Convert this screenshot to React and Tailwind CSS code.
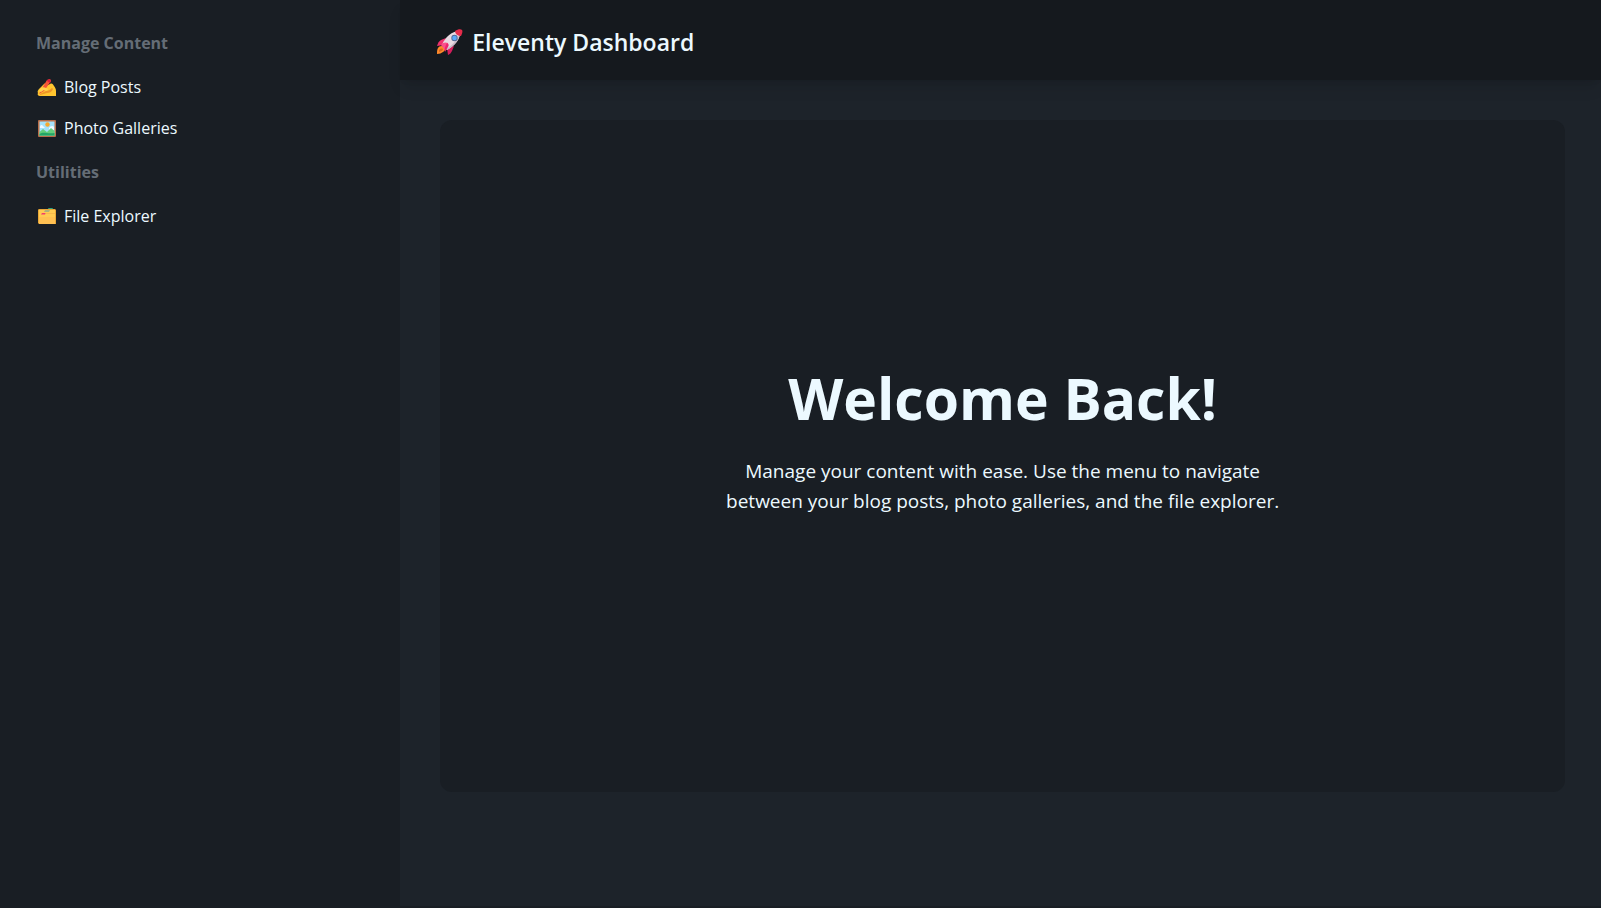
import React from "react";

function RocketIcon() {
  return (
    <svg className="h-7 w-7 shrink-0" viewBox="0 0 28 28" aria-hidden="true">
      <path d="M2 20c1-2 4-3 6-1s1 4-1 5c-2 1-3 2-6 2 0-3 0-4 1-6Z" fill="#ff8a2a" />
      <path d="M3 22c1-1 2-2 4-1 0 2-2 2-4 3Z" fill="#d9681f" />
      <path d="M10 10 5 12c-2 1-3 3-4 6l6-1Z" fill="#f0306e" />
      <path d="m18 18-2 5c-1 2-2 3-4 4l-1-7Z" fill="#d31d5c" />
      <path d="M6 17C9 9 16 3 24 3c1 7-5 15-13 19Z" fill="#e9dbe3" />
      <path d="M24 5c0 6-5 13-13 17l-1-1C17 17 22 11 24 5Z" fill="#cbbac8" />
      <path d="M19 3c3-2 6-2 7-1s0 4-1 6c-3 0-6-2-6-5Z" fill="#e62c4b" />
      <path d="M5 17c2-3 5-3 7-2-1 3-2 5-3 7Z" fill="#fa518b" />
      <path d="M11 15c2 1 2 2 1 4l-3 5c-1-2 0-6 2-9Z" fill="#ed256c" />
      <circle cx="18.5" cy="10" r="3.2" fill="#526c96" />
      <circle cx="18.5" cy="10" r="2.3" fill="#5aa9fa" />
    </svg>
  );
}

function WritingIcon() {
  return (
    <svg className="h-5 w-5 shrink-0" viewBox="-1 0 20 20" aria-hidden="true">
      <path d="M1 15c-1-1 0-3 1-4l5-5c1-1 3 0 2 2l4-2c2-1 3 0 4 2 1 1 2 3 2 5v5H3c-2 0-3-2-2-3Z" fill="#ffc52f" />
      <path d="M9 13c2 0 4-1 6-3l1 1c-1 3-4 4-6 4l-7 2v-1Z" fill="#ee9426" />
      <path d="m10 2 3-1 1 2-7 10-5 3 2-4Z" fill="#f35436" />
      <path d="m10 2 3-1 1 2-1 2-3-2Z" fill="#d91f3a" />
      <path d="M3 11c2-2 4-2 6-1l2 1c0 2-2 2-4 1l-3 2c-2 0-2-1-1-3Z" fill="#ffd34c" />
    </svg>
  );
}

function PhotoIcon() {
  return (
    <svg className="h-5 w-5 shrink-0" viewBox="-1 0 20 20" aria-hidden="true">
      <rect x="1" y="1" width="18" height="17" rx="1" fill="#b96e49" />
      <rect x="2.5" y="2.5" width="15" height="14" fill="#a5e2fa" />
      <circle cx="10.5" cy="5.5" r="2.2" fill="#f6a92e" />
      <path d="M3 8c0-2 2-3 3-1l2 2H3Zm9 1c1-2 4-3 5-1v3h-5Z" fill="#f1faff" />
      <path d="M2.500 13 6 10l4 3 4-4 3.500 3v4.500h-15Z" fill="#63ce7c" />
      <path d="M2.500 15c4-3 7 0 15-1v2.500h-15Z" fill="#22a766" />
    </svg>
  );
}

function FolderIcon() {
  return (
    <svg className="h-5 w-5 shrink-0" viewBox="-1 0 20 20" aria-hidden="true">
      <rect x="11" y="1" width="5" height="3" rx="1" fill="#28a481" />
      <path d="M1 3c0-1 1-1 2-1h15l1 1v14H2l-1-1Z" fill="#e8a737" />
      <path d="M2 3h16v14H2Z" fill="#ffcb52" />
      <path d="M2 10h16v7H2Z" fill="#ffc052" />
      <path d="M8 3.500h5l-1 1H7Z" fill="#6098a4" />
      <path d="M5 6h4l-1 1.500H4Z" fill="#f23e6d" />
      <path d="M9 6h9v1H8Z" fill="#f7b94b" />
    </svg>
  );
}

const sections = [
  {
    title: "Manage Content",
    links: [
      { label: "Blog Posts", Icon: WritingIcon },
      { label: "Photo Galleries", Icon: PhotoIcon },
    ],
  },
  { title: "Utilities", links: [{ label: "File Explorer", Icon: FolderIcon }] },
];

export default function App() {
  return (
    <div className="flex min-h-screen border-b-2 border-[#191e24] bg-[#1d232a] font-['Open_Sans','Noto_Sans',sans-serif] text-[#ecf9ff]">
      <aside className="w-1/4 shrink-0 bg-[#191e24] p-5">
        <nav>
          {sections.map(({ title, links }) => (
            <section key={title}>
              <h2 className="px-4 py-3 text-[16px] leading-[23px] font-bold text-[#656d76]">{title}</h2>
              <ul>
                {links.map(({ label, Icon }) => (
                  <li key={label}>
                    <a href="#" className="flex items-center gap-2 px-4 py-2 text-[16px] leading-[25px]">
                      <Icon />
                      {label}
                    </a>
                  </li>
                ))}
              </ul>
            </section>
          ))}
        </nav>
      </aside>
      <div className="flex min-w-0 flex-1 flex-col">
        <header className="flex h-20 items-center gap-2 bg-[#15191e] pr-8 pl-9 pt-1 shadow-lg">
          <RocketIcon />
          <h1 className="text-[23px] leading-8 font-semibold">Eleventy Dashboard</h1>
        </header>
        <main className="py-10 pr-9 pl-10">
          <section className="flex min-h-[74vh] items-center justify-center rounded-xl bg-[#191e24] pb-7 text-center">
            <div className="max-w-[560px]">
              <h2 className="text-[57px] leading-[60px] font-bold">Welcome Back!</h2>
              <p className="pt-7 text-[19px] leading-[30px]">
                Manage your content with ease. Use the menu to navigate between your blog posts, photo galleries, and the file explorer.
              </p>
            </div>
          </section>
        </main>
      </div>
    </div>
  );
}
